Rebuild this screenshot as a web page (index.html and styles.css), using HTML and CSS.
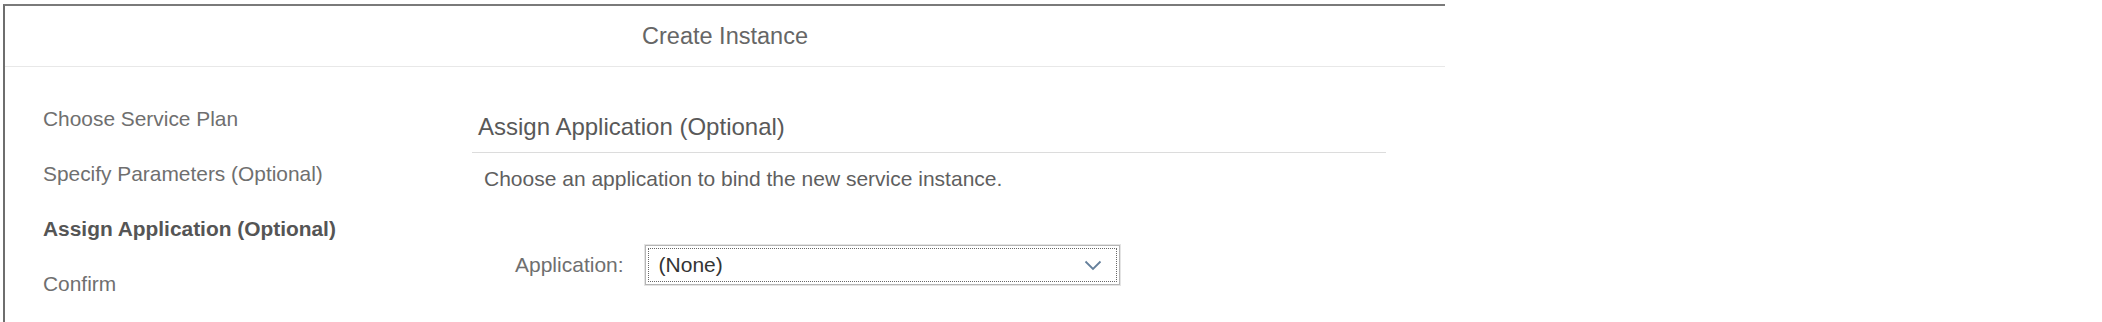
FILE: index.html
```html
<!DOCTYPE html>
<html lang="en">
<head>
    <meta charset="UTF-8">
    <meta name="viewport" content="width=device-width, initial-scale=1.0">
    <title>Create Instance</title>
    <link rel="stylesheet" href="styles.css">
</head>
<body>

<div class="dialog">
    <div class="dialog-header">Create Instance</div>

    <div class="wizard">
        <!-- Wizard steps -->
        <ul class="steps">
            <li class="step">Choose Service Plan</li>
            <li class="step">Specify Parameters (Optional)</li>
            <li class="step active">Assign Application (Optional)</li>
            <li class="step">Confirm</li>
        </ul>

        <div class="content">
            <h2 class="content-title">Assign Application (Optional)</h2>
            <p class="content-desc">Choose an application to bind the new service instance.</p>

            <div class="form-row">
                <label class="form-label" for="application">Application:</label>
                <div class="select" id="application">
                    <div class="select-inner">
                        <span class="select-value">(None)</span>
                        <svg class="select-arrow" width="18" height="11" viewBox="0 0 18 11">
                            <path d="M1.5 1.5 L9 9 L16.5 1.5" fill="none" stroke="#65809c" stroke-width="1.8"/>
                        </svg>
                    </div>
                </div>
            </div>
        </div>
    </div>
</div>

</body>
</html>
```

FILE: styles.css
```css
body {
    font-family: "Liberation Sans", Arial, sans-serif;
    margin: 0;
    padding: 0;
    background-color: #fff;
    overflow: hidden;
}

.dialog {
    width: 1442px;
    height: 318px;
    margin: 4px 0 0 3px;
    border-top: 2px solid #7a7a7a;
    border-left: 2px solid #6e6e6e;
    box-sizing: border-box;
    background-color: #fff;
}

.dialog-header {
    height: 60px;
    line-height: 60px;
    text-align: center;
    font-size: 23.5px;
    color: #666;
    border-bottom: 1px solid #e8e8e8;
}

.wizard {
    display: flex;
}

.steps {
    list-style: none;
    width: 467px;
    margin: 0;
    padding: 24px 0 0 38px;
    box-sizing: border-box;
}

.step {
    font-size: 20.9px;
    line-height: 55px;
    color: #6f6f6f;
}

.step.active {
    font-weight: bold;
    color: #555;
}

.content {
    width: 914px;
    padding-top: 43px;
}

.content-title {
    margin: 0;
    padding: 0 0 8px 6px;
    font-size: 24px;
    line-height: 34px;
    font-weight: normal;
    color: #595959;
    border-bottom: 1px solid #dcdcdc;
}

.content-desc {
    margin: 11px 0 0 0;
    padding-left: 12px;
    font-size: 21px;
    line-height: 30px;
    color: #5f5f5f;
}

.form-row {
    display: flex;
    align-items: center;
    margin-top: 51px;
    padding-left: 43px;
    gap: 21px;
}

.form-label {
    font-size: 21px;
    color: #6f6f6f;
}

.select {
    width: 475px;
    height: 40px;
    padding: 2px;
    box-sizing: border-box;
    border: 1px solid #b5b5b5;
    box-shadow: 0 0 0 1px #e4e4e4;
}

.select-inner {
    height: 100%;
    display: flex;
    align-items: center;
    justify-content: space-between;
    padding: 0 14px 0 10px;
    box-sizing: border-box;
    border: 1px dotted #666;
}

.select-value {
    font-size: 21px;
    color: #333;
}
```
